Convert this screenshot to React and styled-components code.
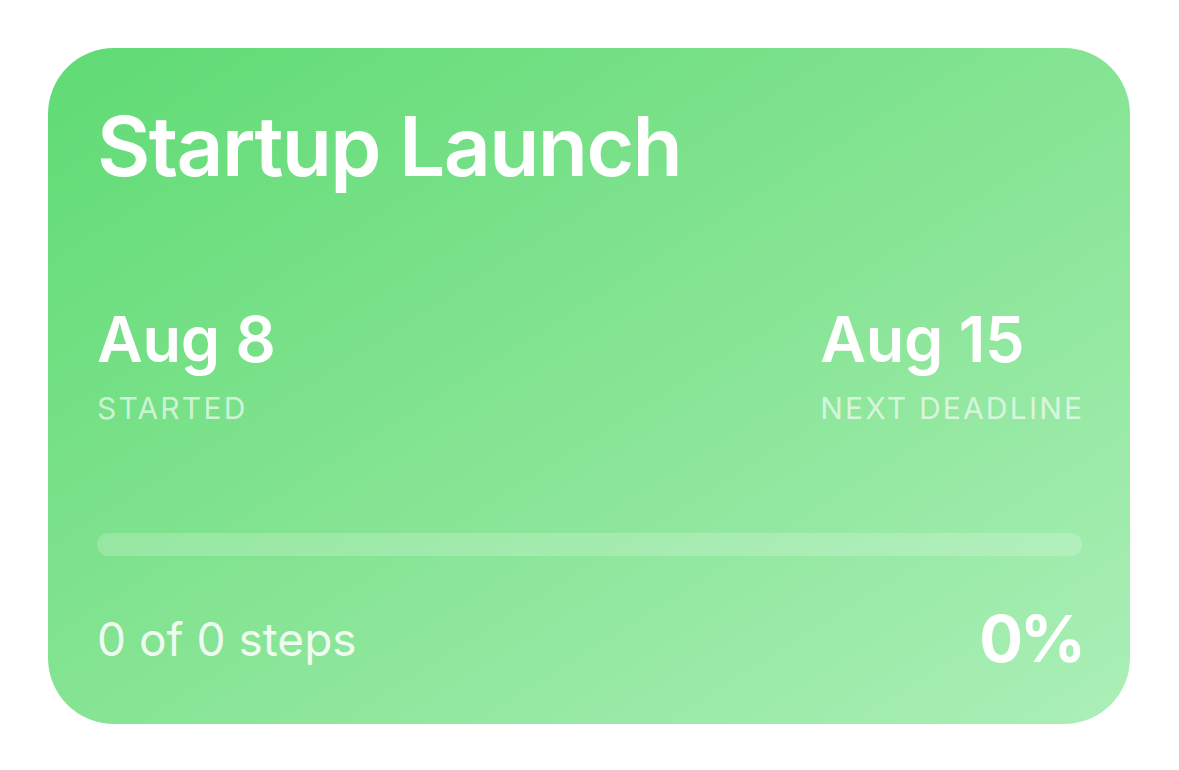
import React from 'react'
import styled, { createGlobalStyle } from 'styled-components'

const GlobalStyle = createGlobalStyle`
  html, body {
    margin: 0;
    padding: 0;
    background: #ffffff;
    font-family: Inter, "Noto Sans", "Liberation Sans", sans-serif;
  }
`

const Page = styled.div`
  padding: 48px 49px 45px 48px;
`

const Card = styled.div`
  width: 1082px;
  box-sizing: border-box;
  padding: 58px 48px 53px 49px;
  border-radius: 66px;
  background: linear-gradient(to bottom right, #5fdb74 0%, #85e493 50%, #abefb8 100%);
  color: #ffffff;
  display: flex;
  flex-direction: column;
`

const Title = styled.h1`
  margin: 0;
  font-size: 82px;
  line-height: 1;
  font-weight: 600;
  letter-spacing: -1.6px;
`

const DatesRow = styled.div`
  margin-top: 120px;
  display: flex;
  justify-content: space-between;
`

const DateBlock = styled.div`
  display: flex;
  flex-direction: column;
  gap: 22px;
`

const DateValue = styled.div`
  font-size: 63px;
  line-height: 1;
  font-weight: 600;
  letter-spacing: -0.3px;
`

const DateLabel = styled.div`
  font-size: 30px;
  line-height: 1;
  font-weight: 400;
  letter-spacing: 2.2px;
  margin-right: -2.2px;
  text-transform: uppercase;
  color: rgba(255, 255, 255, 0.65);
`

const Track = styled.div`
  margin-top: 110px;
  height: 23px;
  border-radius: 12px;
  background: rgba(255, 255, 255, 0.2);
  overflow: hidden;
`

const Fill = styled.div`
  height: 100%;
  background: #ffffff;
`

const Footer = styled.div`
  margin-top: 50px;
  display: flex;
  justify-content: space-between;
  align-items: center;
`

const Steps = styled.div`
  font-size: 46px;
  line-height: 1;
  font-weight: 400;
  color: rgba(255, 255, 255, 0.88);
`

const Percent = styled.div`
  font-size: 65px;
  line-height: 1;
  font-weight: 700;
  letter-spacing: -3px;
  margin-right: -1px;
`

export default function App() {
  const done = 0
  const total = 0
  const pct = total ? Math.round((done / total) * 100) : 0

  return (
    <>
      <GlobalStyle />
      <Page>
        <Card>
          <Title>Startup Launch</Title>
          <DatesRow>
            <DateBlock>
              <DateValue>Aug 8</DateValue>
              <DateLabel>Started</DateLabel>
            </DateBlock>
            <DateBlock>
              <DateValue>Aug 15</DateValue>
              <DateLabel>Next Deadline</DateLabel>
            </DateBlock>
          </DatesRow>
          <Track>
            <Fill style={{ width: `${pct}%` }} />
          </Track>
          <Footer>
            <Steps>{done} of {total} steps</Steps>
            <Percent>{pct}%</Percent>
          </Footer>
        </Card>
      </Page>
    </>
  )
}
